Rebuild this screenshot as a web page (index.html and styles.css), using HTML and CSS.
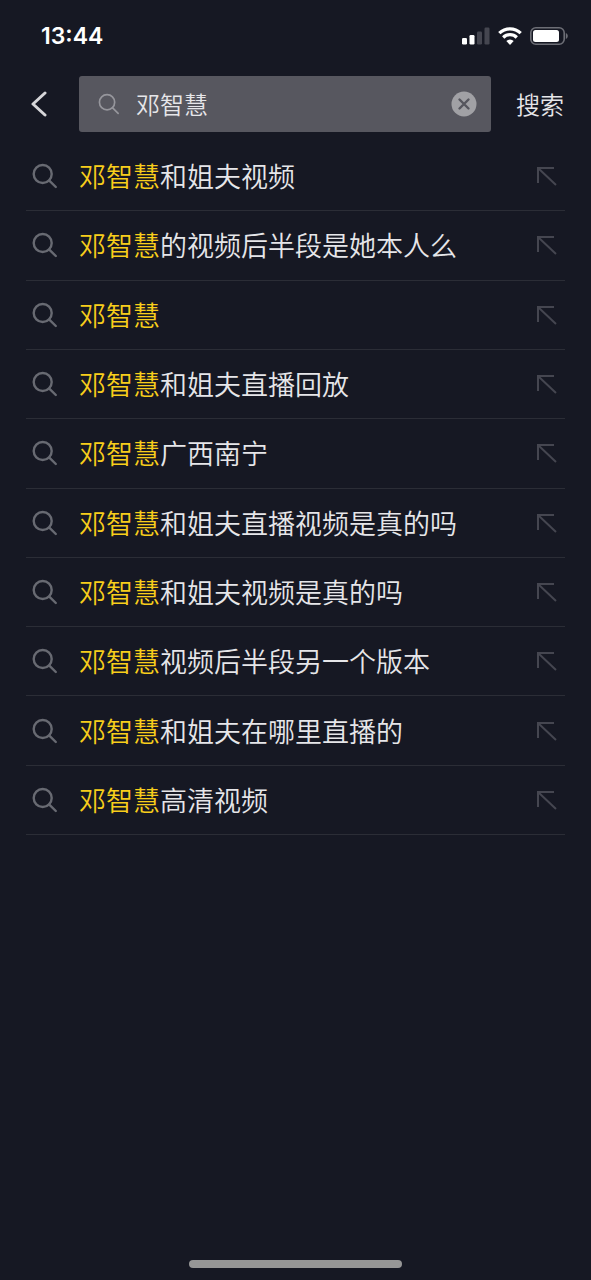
FILE: index.html
```html
<!DOCTYPE html>
<html lang="zh-CN">
<head>
<meta charset="utf-8">
<meta name="viewport" content="width=device-width, initial-scale=1">
<title>搜索</title>
<link rel="stylesheet" href="styles.css">
</head>
<body>
<svg class="sprite" aria-hidden="true">
  <symbol id="search" viewBox="0 0 26 26"><circle cx="10.700" cy="11" r="9"/><path d="M17.300 17.600l6.500 6.400"/></symbol>
  <symbol id="fill" viewBox="0 0 22 22"><path d="M18 3H2v15M2 3l18 17"/></symbol>
</svg>
<div class="screen">
  <header class="status">
    <time class="clock">13:44</time>
    <div class="indicators">
      <svg width="28" height="18" viewBox="0 0 28 18" aria-label="信号">
        <g fill="#fff"><rect x="0" y="11" width="5" height="6.500" rx="1.200"/><rect x="7.500" y="8" width="5" height="9.500" rx="1.200"/></g>
        <g fill="#454650"><rect x="15" y="4.500" width="5" height="13" rx="1.200"/><rect x="22.500" y="0.500" width="5" height="17" rx="1.200"/></g>
      </svg>
      <svg width="24" height="18" viewBox="0 0 24 18" fill="none" stroke="#fff" stroke-width="3.200" aria-label="无线网络">
        <path d="M1.300 6.200a15.200 15.200 0 0 1 21.400 0"/><path d="M5.200 10.500a9.600 9.600 0 0 1 13.600 0"/>
        <path d="M12 17.900l-3.700-3.800a5.300 5.300 0 0 1 7.400 0z" fill="#fff" stroke="none"/>
      </svg>
      <svg width="38" height="18" viewBox="0 0 38 18" aria-label="电池">
        <rect x="0.800" y="0.800" width="33.400" height="16.400" rx="5" fill="none" stroke="#6d6e76" stroke-width="1.600"/>
        <rect x="3" y="3" width="26" height="12" rx="2.500" fill="#fff"/>
        <path d="M35.800 6c2.600 1 2.600 5 0 6z" fill="#6d6e76"/>
      </svg>
    </div>
  </header>
  <form class="searchbar">
    <button class="back" type="button" aria-label="返回">
      <svg width="16" height="26" viewBox="0 0 16 26" fill="none" stroke="#d6d6d9" stroke-width="3" stroke-linecap="round" stroke-linejoin="round"><path d="M14 2L2 13l12 11"/></svg>
    </button>
    <div class="field">
      <svg class="field-icon"><use href="#search"/></svg>
      <input class="query" type="text" value="邓智慧" aria-label="搜索内容">
      <button class="clear" type="button" aria-label="清除">
        <svg width="26" height="26" viewBox="0 0 26 26"><circle cx="13" cy="13" r="12.500" fill="#a1a1a5"/><path d="M8.500 8.500l9 9m0-9l-9 9" stroke="#56565e" stroke-width="2.400" stroke-linecap="round"/></svg>
      </button>
    </div>
    <button class="submit" type="submit">搜索</button>
  </form>
  <main class="content">
    <ul class="list">
      <li class="row"><svg class="glass"><use href="#search"/></svg><a class="term" href="#"><mark>邓智慧</mark>和姐夫视频</a><button class="fill" type="button" aria-label="填入"><svg class="arrow"><use href="#fill"/></svg></button></li>
      <li class="row"><svg class="glass"><use href="#search"/></svg><a class="term" href="#"><mark>邓智慧</mark>的视频后半段是她本人么</a><button class="fill" type="button" aria-label="填入"><svg class="arrow"><use href="#fill"/></svg></button></li>
      <li class="row"><svg class="glass"><use href="#search"/></svg><a class="term" href="#"><mark>邓智慧</mark></a><button class="fill" type="button" aria-label="填入"><svg class="arrow"><use href="#fill"/></svg></button></li>
      <li class="row"><svg class="glass"><use href="#search"/></svg><a class="term" href="#"><mark>邓智慧</mark>和姐夫直播回放</a><button class="fill" type="button" aria-label="填入"><svg class="arrow"><use href="#fill"/></svg></button></li>
      <li class="row"><svg class="glass"><use href="#search"/></svg><a class="term" href="#"><mark>邓智慧</mark>广西南宁</a><button class="fill" type="button" aria-label="填入"><svg class="arrow"><use href="#fill"/></svg></button></li>
      <li class="row"><svg class="glass"><use href="#search"/></svg><a class="term" href="#"><mark>邓智慧</mark>和姐夫直播视频是真的吗</a><button class="fill" type="button" aria-label="填入"><svg class="arrow"><use href="#fill"/></svg></button></li>
      <li class="row"><svg class="glass"><use href="#search"/></svg><a class="term" href="#"><mark>邓智慧</mark>和姐夫视频是真的吗</a><button class="fill" type="button" aria-label="填入"><svg class="arrow"><use href="#fill"/></svg></button></li>
      <li class="row"><svg class="glass"><use href="#search"/></svg><a class="term" href="#"><mark>邓智慧</mark>视频后半段另一个版本</a><button class="fill" type="button" aria-label="填入"><svg class="arrow"><use href="#fill"/></svg></button></li>
      <li class="row"><svg class="glass"><use href="#search"/></svg><a class="term" href="#"><mark>邓智慧</mark>和姐夫在哪里直播的</a><button class="fill" type="button" aria-label="填入"><svg class="arrow"><use href="#fill"/></svg></button></li>
      <li class="row"><svg class="glass"><use href="#search"/></svg><a class="term" href="#"><mark>邓智慧</mark>高清视频</a><button class="fill" type="button" aria-label="填入"><svg class="arrow"><use href="#fill"/></svg></button></li>
    </ul>
  </main>
  <footer class="home"><div class="home-bar"></div></footer>
</div>
</body>
</html>
```

FILE: styles.css
```css
* { box-sizing: border-box; }
body {
  margin: 0;
  background: #161823;
  color: #e6e6e9;
  font-family: "Noto Sans CJK SC", sans-serif;
  font-weight: 350;
}
button, input {
  padding: 0;
  border: 0;
  background: none;
  color: inherit;
  font: inherit;
}
svg { display: block; flex: none; }
.sprite { position: absolute; width: 0; height: 0; }
.screen {
  display: flex;
  flex-direction: column;
  min-height: 100vh;
}
.status {
  display: flex;
  align-items: center;
  justify-content: space-between;
  height: 72px;
  padding: 0 23px 0 41px;
}
.clock {
  color: #fff;
  font: 600 23px/28px Inter, sans-serif;
}
.indicators { display: flex; align-items: center; gap: 8px; }
.searchbar {
  display: flex;
  align-items: center;
  padding: 4px 27px 10px 31px;
}
.back { width: 48px; }
.field {
  display: flex;
  flex: 1;
  align-items: center;
  min-width: 0;
  height: 56px;
  padding: 0 14px 0 19px;
  border-radius: 3px;
  background: #57575f;
}
.field-icon {
  width: 22px;
  height: 22px;
  fill: none;
  stroke: #96969c;
  stroke-width: 2;
  stroke-linecap: round;
}
.query {
  flex: 1;
  min-width: 0;
  height: 40px;
  margin-left: 16px;
  padding-bottom: 2px;
  outline: 0;
  font-size: 24px;
}
.submit { margin-left: 25px; font-size: 24px; line-height: 36px; }
.content { flex: 1; padding: 0 26px; }
.list {
  display: grid;
  grid-auto-rows: 1fr;
  min-height: 693px;
  margin: 0;
  padding: 0;
  list-style: none;
}
.row {
  display: flex;
  align-items: center;
  padding: 0 7px 0 6px;
  border-bottom: 1px solid #2b2d36;
}
.glass {
  width: 26px;
  height: 26px;
  fill: none;
  stroke: #686a72;
  stroke-width: 2.4;
  stroke-linecap: round;
}
.term {
  flex: 1;
  margin-left: 21px;
  color: inherit;
  font-size: 27px;
  line-height: 40px;
  text-decoration: none;
}
.term mark { background: none; color: #f8ce1b; }
.arrow {
  width: 22px;
  height: 22px;
  fill: none;
  stroke: #454650;
  stroke-width: 2;
}
.home { display: flex; justify-content: center; padding: 12px 0; }
.home-bar {
  width: 36%;
  height: 8px;
  border-radius: 4px;
  background: #969696;
}
```
